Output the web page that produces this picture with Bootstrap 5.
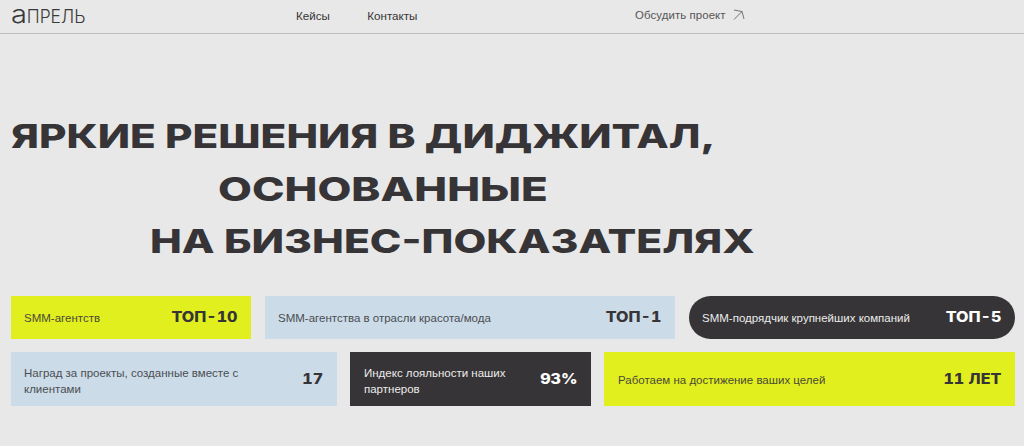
<!doctype html>
<html lang="ru"><head><meta charset="utf-8"><title>Апрель</title>
<link href="https://cdn.jsdelivr.net/npm/bootstrap@5.3.0/dist/css/bootstrap.min.css" rel="stylesheet">
<style>
html,body{height:100%}
body{background:#e8e8e8;color:#363436;font-family:"Liberation Sans",Arial,sans-serif;overflow:hidden}
.site-top{height:34px;border-bottom:1px solid #bdbdbd;padding-bottom:2px}
.logo-txt{font-family:Inter,sans-serif;font-weight:300;font-size:18px;line-height:26px;color:#3a3a3a;display:inline-block;transform:scaleX(.97);transform-origin:left center;text-decoration:none;white-space:nowrap}
.logo-a{display:inline-block;font-size:24px;line-height:26px;transform:scaleX(1.25);transform-origin:left center;margin-right:3px}
.logo-box{width:296px;padding-left:11px}
.nav-ln{font-size:11.6px;color:#363436;text-decoration:none}
.nav-box{width:339px;gap:37.5px}
.cta-ln{font-size:11.4px;color:#555;text-decoration:none;letter-spacing:.1px;gap:7px}
.hero-block{padding:76px 0 0 11px;height:262px}
.hero-ln{font-family:Inter,sans-serif;font-weight:800;font-size:33px;line-height:52.5px;margin:0;white-space:nowrap;width:fit-content;transform-origin:left center;transform:scaleX(1.28);color:#363436}
.hero-ln.l2{margin-left:207px;transform:scaleX(1.33)}
.hero-ln.l3{margin-left:139px;transform:scaleX(1.29)}
.tile-wrap{padding:0 9px 0 11px;gap:13px}
.tile-row{gap:14px}
.tile-row.tight{gap:13px}
.tile{padding:0 14px 0 13px;font-size:11.5px;line-height:16px}
.tile.pl14{padding-left:14px}
.tile.h1x{height:43px}.tile.h2x{height:54px}
.h1x .num{margin-bottom:2px}
.tpad2{padding-top:4px}.tpad1{padding-top:2px}
.w240{width:240px}.w410{width:410px}.w326{width:326px}.w241{width:241px}.wrest{flex:1 1 0}
.lime{background:#e2ef1f;color:#4a4a38}.sky{background:#ccdbe8;color:#4a4e52}.ink{background:#363436;color:#ececec}
.pill{border-radius:22px}
.num{font-family:Inter,sans-serif;font-weight:800;font-size:14px;line-height:1;color:#363436;white-space:nowrap;display:inline-block;font-variant-numeric:tabular-nums;transform:scaleX(1.15);transform-origin:right center}
.ink .num{color:#fff}
</style></head><body>
<header class="site-top d-flex align-items-center">
  <div class="logo-box"><a class="logo-txt" href="#"><span class="logo-a">а</span>ПРЕЛЬ</a></div>
  <nav class="nav-box d-flex"><a class="nav-ln" href="#">Кейсы</a><a class="nav-ln" href="#">Контакты</a></nav>
  <a class="cta-ln d-flex align-items-center" href="#">Обсудить проект
    <svg width="12" height="12" viewBox="0 0 12 12" fill="none" stroke="#555" stroke-width=".8"><path d="M1 1 9 2.5 11 10M9 2.5 1 10.5"/></svg></a>
</header>
<main>
  <section class="hero-block">
    <h1 class="hero-ln">ЯРКИЕ РЕШЕНИЯ В ДИДЖИТАЛ,</h1>
    <h1 class="hero-ln l2">ОСНОВАННЫЕ</h1>
    <h1 class="hero-ln l3">НА БИЗНЕС-ПОКАЗАТЕЛЯХ</h1>
  </section>
  <section class="tile-wrap d-flex flex-column">
    <div class="tile-row d-flex">
      <div class="tile h1x w240 lime d-flex align-items-center justify-content-between"><span>SMM-агентств</span><span class="num">ТОП-10</span></div>
      <div class="tile h1x w410 sky d-flex align-items-center justify-content-between"><span>SMM-агентства в отрасли красота/мода</span><span class="num">ТОП-1</span></div>
      <div class="tile h1x wrest ink pill d-flex align-items-center justify-content-between"><span>SMM-подрядчик крупнейших компаний</span><span class="num">ТОП-5</span></div>
    </div>
    <div class="tile-row tight d-flex">
      <div class="tile h2x w326 sky d-flex align-items-center justify-content-between"><span class="w-75 tpad2">Наград за проекты, созданные вместе с клиентами</span><span class="num">17</span></div>
      <div class="tile pl14 h2x w241 ink d-flex align-items-center justify-content-between"><span class="w-75 tpad2">Индекс лояльности наших партнеров</span><span class="num">93%</span></div>
      <div class="tile pl14 h2x wrest lime d-flex align-items-center justify-content-between"><span class="tpad1">Работаем на достижение ваших целей</span><span class="num">11 ЛЕТ</span></div>
    </div>
  </section>
</main>
<script src="https://cdn.jsdelivr.net/npm/bootstrap@5.3.0/dist/js/bootstrap.bundle.min.js"></script>
</body></html>
